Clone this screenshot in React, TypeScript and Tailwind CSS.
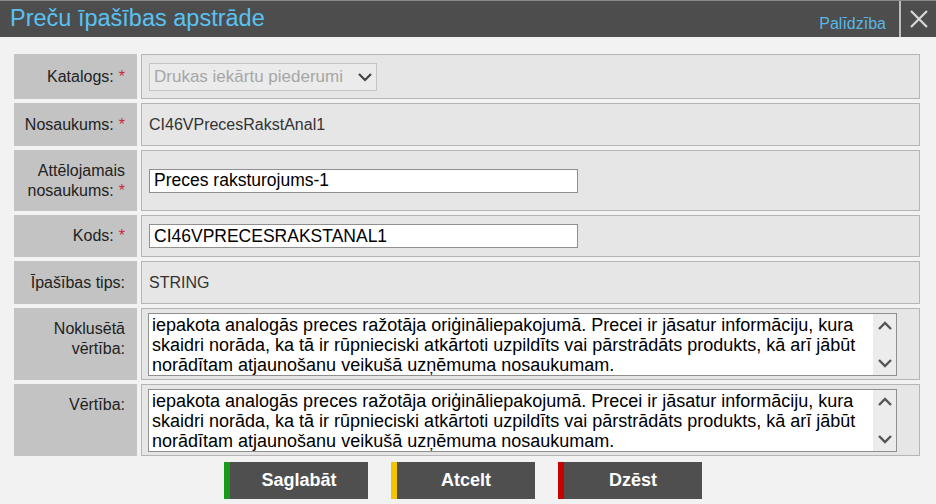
import React from 'react';

const font = { fontFamily: '"Liberation Sans", Arial, sans-serif' };

const longLines = [
  'iepakota analogās preces ražotāja oriģināliepakojumā. Precei ir jāsatur informāciju, kura',
  'skaidri norāda, ka tā ir rūpnieciski atkārtoti uzpildīts vai pārstrādāts produkts, kā arī jābūt',
  'norādītam atjaunošanu veikušā uzņēmuma nosaukumam.',
];

function Req() {
  return <span className="text-[#c8283c] ml-[5px]">*</span>;
}

function Row({ h, label, top, children }: { h: string; label: React.ReactNode; top?: boolean; children: React.ReactNode }) {
  return (
    <div className={`flex gap-1 ${h}`}>
      <div className={`w-[123px] shrink-0 bg-[#c3c3c3] flex justify-end pr-[12px] text-right text-[16px] leading-[20px] text-[#222] ${top ? 'items-start pt-[11px]' : 'items-center'}`}>
        {label}
      </div>
      <div className="flex-1 bg-[#e6e6e6] border border-[#b5b5b5] flex items-center pl-[6px] text-[16px] text-[#333]">
        {children}
      </div>
    </div>
  );
}

function TextBox() {
  return (
    <div className="w-[749px] h-[63px] bg-white border border-[#8f8f8f] flex">
      <div className="flex-1 pl-[3px] pt-[1px] text-[18px] leading-[20px] text-black overflow-hidden">
        {longLines.map((l) => (
          <div key={l} className="whitespace-nowrap">{l}</div>
        ))}
      </div>
      <div className="w-[23px] bg-[#ececec] flex flex-col items-center justify-between py-[6px]">
        <svg width="16" height="12" viewBox="0 0 16 12"><path d="M2 9 L8 3 L14 9" fill="none" stroke="#555" strokeWidth="2.4" /></svg>
        <svg width="16" height="12" viewBox="0 0 16 12"><path d="M2 3 L8 9 L14 3" fill="none" stroke="#555" strokeWidth="2.4" /></svg>
      </div>
    </div>
  );
}

function Btn({ color, text }: { color: string; text: string }) {
  return (
    <button className={`w-[144px] h-[37px] bg-[#4f4f4f] border-l-[6px] ${color} text-white font-bold text-[18px]`} style={font}>
      {text}
    </button>
  );
}

export default function App() {
  return (
    <div className="w-[936px] h-[504px] bg-[#f2f2f2] flex flex-col overflow-hidden" style={font}>
      <div className="h-[37px] bg-[#4d4d4d] border-t border-[#8a8a8a] flex items-stretch">
        <div className="flex-1 flex items-center pl-[10px] text-[23.5px] text-[#59c2f3]">Preču īpašības apstrāde</div>
        <div className="flex items-center pr-[13px] pt-[9px] text-[16px] text-[#5ab6e8]">Palīdzība</div>
        <div className="w-[2px] bg-[#bdbdbd]" />
        <div className="w-[35px] flex items-center justify-center">
          <svg width="20" height="20" viewBox="0 0 20 20"><path d="M2 2 L18 18 M18 2 L2 18" stroke="#d8d8d8" strokeWidth="2.2" /></svg>
        </div>
      </div>

      <div className="flex flex-col gap-1 pt-[17px] pl-[14px] pr-[16px]">
        <Row h="h-[45px]" label={<span>Katalogs:<Req /></span>}>
          <div className="w-[228px] h-[28px] ml-[1px] bg-[#ebebeb] border border-[#c4c4c4] flex items-center justify-between pl-[4px] pr-[3px] text-[#a6a6a6] text-[17px]">
            <span>Drukas iekārtu piederumi</span>
            <svg width="16" height="12" viewBox="0 0 16 12"><path d="M2 3 L8 9 L14 3" fill="none" stroke="#444" strokeWidth="2.2" /></svg>
          </div>
        </Row>
        <Row h="h-[43px]" label={<span>Nosaukums:<Req /></span>}>
          <span className="pl-[1px]">CI46VPrecesRakstAnal1</span>
        </Row>
        <Row h="h-[61px]" label={<span>Attēlojamais<br />nosaukums:<Req /></span>}>
          <div className="w-[429px] h-[24px] ml-[1px] bg-white border border-[#8f8f8f] pl-[4px] flex items-center text-[17.5px] text-black">Preces raksturojums-1</div>
        </Row>
        <Row h="h-[42px]" label={<span>Kods:<Req /></span>}>
          <div className="w-[429px] h-[24px] ml-[1px] bg-white border border-[#8f8f8f] pl-[4px] flex items-center text-[17.5px] text-black">CI46VPRECESRAKSTANAL1</div>
        </Row>
        <Row h="h-[43px]" label="Īpašības tips:">
          <span className="pl-[1px]">STRING</span>
        </Row>
        <Row h="h-[72px]" top label={<span>Noklusētā<br />vērtība:</span>}>
          <TextBox />
        </Row>
        <Row h="h-[72px]" top label={<span>Vērtība:</span>}>
          <TextBox />
        </Row>
      </div>

      <div className="flex gap-[23px] pl-[224px] pt-[6px]">
        <Btn color="border-[#1a9a1a]" text="Saglabāt" />
        <Btn color="border-[#f5c400]" text="Atcelt" />
        <Btn color="border-[#c80000]" text="Dzēst" />
      </div>
    </div>
  );
}
